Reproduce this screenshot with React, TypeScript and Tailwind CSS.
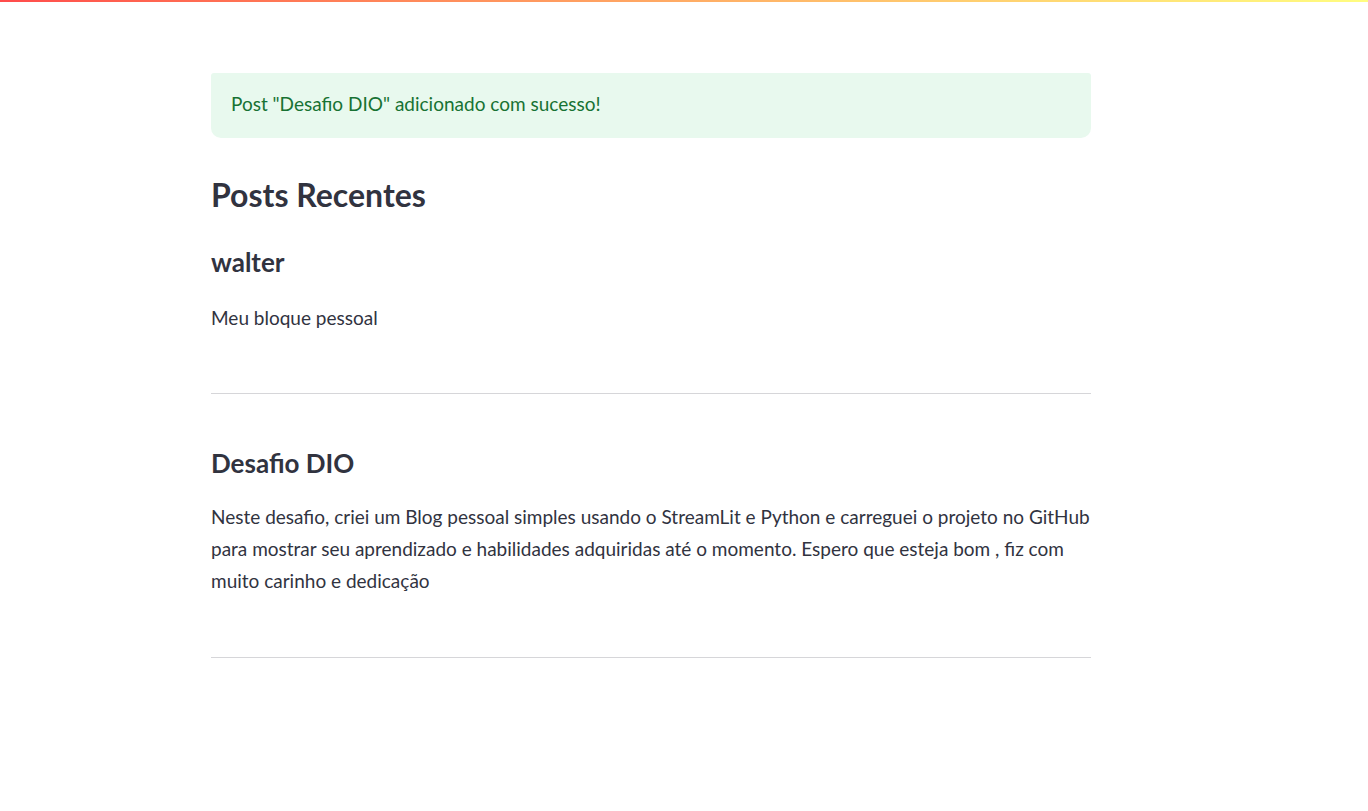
import React from "react";

export default function App() {
  return (
    <div className="min-h-[811px] w-full bg-white text-[#31333f]" style={{ fontFamily: '"Lato", "Liberation Sans", sans-serif' }}>
      <div className="h-[2px] w-full bg-gradient-to-r from-[#ff4b4b] to-[#fffd80]" />
      <div className="mx-auto w-[880px] pt-[71px] -translate-x-[33px]">
        <div className="flex h-[65px] items-center rounded-t-[3px] rounded-b-[10px] bg-[#e8f9ee] px-5 pb-[3px] text-[19px] text-[#177233]">
          Post "Desafio DIO" adicionado com sucesso!
        </div>
        <h1 className="mt-[35px] text-[32px] font-bold leading-[44px]">Posts Recentes</h1>
        <h2 className="mt-[27px] text-[26px] font-bold leading-[36px]">walter</h2>
        <p className="mt-[22px] text-[19px] leading-[32px]">Meu bloque pessoal</p>
        <div className="mt-[59px] h-px w-full bg-[#d6d6d9]" />
        <h2 className="mt-[51px] text-[26px] font-bold leading-[36px]">Desafio DIO</h2>
        <p className="mt-[20px] text-[19px] leading-[32px]">
          Neste desafio, criei um Blog pessoal simples usando o StreamLit e Python e carreguei o projeto no GitHub para mostrar seu aprendizado e habilidades adquiridas até o momento. Espero que esteja bom , fiz com muito carinho e dedicação
        </p>
        <div className="mt-[60px] h-px w-full bg-[#d6d6d9]" />
      </div>
    </div>
  );
}
